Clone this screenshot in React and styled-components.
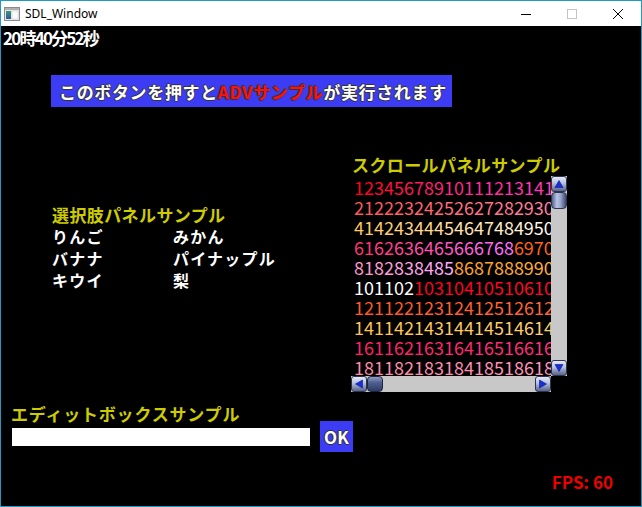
import React from 'react';
import styled, { createGlobalStyle } from 'styled-components';

const Global = createGlobalStyle`
  html, body { margin: 0; padding: 0; background: #fff; }
  body { font-family: "Noto Sans CJK JP", "Noto Sans", sans-serif; }
`;

const Window = styled.div`
  width: 642px;
  height: 507px;
  box-sizing: border-box;
  border: 1px solid #1f9ac4;
  display: flex;
  flex-direction: column;
  background: #fff;
  overflow: hidden;
`;

const TitleBar = styled.div`
  height: 25px;
  flex-shrink: 0;
  display: flex;
  align-items: center;
  background: #fff;
`;

const AppIcon = styled.svg`
  margin-left: 3px;
  flex-shrink: 0;
`;

const Title = styled.span`
  margin-left: 5px;
  font: 12px "Noto Sans", "Open Sans", sans-serif;
  color: #000;
  line-height: 25px;
`;

const Controls = styled.div`
  margin-left: auto;
  display: flex;
  height: 100%;
`;

const CtrlBtn = styled.div`
  width: 46px;
  height: 100%;
  display: flex;
  align-items: center;
  justify-content: center;
`;

const Client = styled.div`
  height: 480px;
  flex-shrink: 0;
  background: #000;
  display: flex;
  flex-direction: column;
  font-family: "Noto Sans CJK JP", sans-serif;
  font-weight: 700;
`;

const Clock = styled.div`
  margin: 3px 0 0 2px;
  font-size: 17px;
  line-height: 17px;
  height: 17px;
  letter-spacing: -1.8px;
  color: #fff;
  white-space: nowrap;
`;

const AdvButton = styled.div`
  margin: 29px 0 0 50px;
  width: 401px;
  height: 32px;
  box-sizing: border-box;
  padding-left: 8px;
  background: #3c3cf5;
  display: flex;
  align-items: center;
  font-size: 17px;
  letter-spacing: 0.65px;
  color: #fff;
  white-space: nowrap;
  text-shadow: 1px 0 #333, -1px 0 #333, 0 1px #333, 0 -1px #333;
`;

const Red = styled.span`
  color: #ff1010;
`;

const Middle = styled.div`
  display: grid;
  grid-template-columns: 350px 1fr;
  align-items: start;
`;

const SelectPanel = styled.div`
  margin-top: 99px;
  padding-left: 51px;
`;

const PanelTitle = styled.div`
  font-size: 17px;
  line-height: 17px;
  height: 17px;
  color: #cccc00;
  letter-spacing: 0.4px;
  white-space: nowrap;
`;

const ItemGrid = styled.div`
  margin-top: 5px;
  display: grid;
  grid-template-columns: 121px 121px;
  grid-auto-rows: 22px;
`;

const Item = styled.div`
  font-size: 16px;
  line-height: 16px;
  letter-spacing: 1.2px;
  color: #fff;
  white-space: nowrap;
`;

const ScrollPanel = styled.div`
  margin-top: 49px;
  display: flex;
  flex-direction: column;
`;

const ScrollTitle = styled(PanelTitle)`
  margin-left: 1px;
  margin-bottom: 3px;
`;

const ScrollGrid = styled.div`
  display: grid;
  grid-template-columns: 200px 16px;
  grid-template-rows: 200px 16px;
`;

const NumberArea = styled.div`
  overflow: hidden;
  padding: 1px 0 0 3px;
  box-sizing: border-box;
  font-family: "Noto Sans CJK JP", sans-serif;
  font-weight: 400;
  font-size: 18px;
`;

const NumRow = styled.div`
  height: 20px;
  line-height: 20px;
  white-space: nowrap;
`;

const VBar = styled.div`
  background: #c8c8c8;
  display: flex;
  flex-direction: column;
`;

const HBar = styled.div`
  background: #c8c8c8;
  display: flex;
`;

const Corner = styled.div`
  background: #000;
`;

const Spacer = styled.div`
  flex: 1;
`;

const ArrowBtn = styled.div`
  width: 16px;
  height: 16px;
  box-sizing: border-box;
  border-radius: 3px;
  border: 1px solid #2c3450;
  background: linear-gradient(to bottom, #e4eaf6 0%, #b4c0dc 45%, #7884a8 80%, #59648a 100%);
  display: flex;
  align-items: center;
  justify-content: center;
  flex-shrink: 0;
`;

const VThumb = styled.div`
  width: 16px;
  height: 17px;
  box-sizing: border-box;
  border-radius: 4px;
  border: 1px solid #2c3450;
  background: linear-gradient(to right, #56628c 0%, #b8c4e4 35%, #9aa8cc 60%, #3c4870 100%);
  flex-shrink: 0;
`;

const HThumb = styled.div`
  width: 16px;
  height: 16px;
  box-sizing: border-box;
  border-radius: 4px;
  border: 1px solid #1c2440;
  background: linear-gradient(to bottom, #8e9cc4 0%, #50608e 40%, #2c3a66 100%);
  flex-shrink: 0;
`;

const EditSection = styled.div`
  margin: 15px 0 0 10px;
  display: flex;
  flex-direction: column;
`;

const EditLabel = styled(PanelTitle)`
  line-height: 14px;
  height: 14px;
  letter-spacing: 0.8px;
`;

const EditRow = styled.div`
  display: flex;
  align-items: center;
  gap: 10px;
`;

const EditBox = styled.div`
  width: 298px;
  height: 18px;
  background: #fff;
  margin-left: 1px;
`;

const OkButton = styled.div`
  width: 33px;
  height: 31px;
  background: #3c3cf5;
  color: #fff;
  font-size: 17px;
  display: flex;
  align-items: center;
  justify-content: center;
  text-shadow: 1px 0 #333, -1px 0 #333, 0 1px #333, 0 -1px #333;
`;

const FpsRow = styled.div`
  margin-top: 21px;
  display: flex;
  justify-content: flex-end;
  padding-right: 28px;
`;

const Fps = styled.div`
  font-size: 17px;
  line-height: 17px;
  color: #ee0000;
  white-space: pre;
`;

const segs = [
  [1, 20, [255, 0, 24], [255, 80, 255]],
  [21, 40, [255, 88, 88], [255, 170, 240]],
  [41, 50, [255, 200, 96], [255, 246, 236]],
  [51, 60, [255, 250, 240], [255, 255, 255]],
  [61, 68, [255, 52, 116], [255, 110, 255]],
  [69, 80, [255, 96, 24], [255, 130, 80]],
  [81, 85, [255, 150, 200], [255, 170, 250]],
  [86, 100, [255, 160, 40], [255, 210, 90]],
  [101, 102, [255, 255, 255], [255, 250, 245]],
  [103, 120, [255, 0, 32], [255, 40, 80]],
  [121, 140, [255, 88, 36], [255, 130, 100]],
  [141, 160, [255, 196, 84], [255, 230, 160]],
  [161, 180, [255, 32, 100], [255, 80, 190]],
  [181, 200, [255, 136, 168], [255, 170, 230]],
];

function colorOf(n) {
  const s = segs.find(([a, b]) => n >= a && n <= b);
  const [a, b, c1, c2] = s;
  const t = b === a ? 0 : (n - a) / (b - a);
  const c = c1.map((v, i) => Math.round(v + (c2[i] - v) * t));
  return `rgb(${c[0]},${c[1]},${c[2]})`;
}

const Tri = ({ dir }) => {
  const pts = {
    up: '5,1.5 9,8.5 1,8.5',
    down: '1,1.5 9,1.5 5,8.5',
    left: '1.5,5 8.5,1 8.5,9',
    right: '1.5,1 8.5,5 1.5,9',
  }[dir];
  return (
    <svg width="10" height="10" viewBox="0 0 10 10">
      <polygon points={pts} fill="#1a2ed8" stroke="#0c1690" strokeWidth="0.6" />
    </svg>
  );
};

const items = [
  ['りんご', 'みかん'],
  ['バナナ', 'パイナップル'],
  ['キウイ', '梨'],
];

export default function App() {
  const rows = Array.from({ length: 10 }, (_, r) =>
    Array.from({ length: 20 }, (_, i) => r * 20 + i + 1)
  );
  return (
    <>
      <Global />
      <Window>
        <TitleBar>
          <AppIcon width="16" height="14" viewBox="0 0 16 14">
            <defs>
              <linearGradient id="pane" x1="0" y1="0" x2="0" y2="1">
                <stop offset="0" stopColor="#3a9a7a" />
                <stop offset="1" stopColor="#2a5a9a" />
              </linearGradient>
            </defs>
            <rect x="0.5" y="0.5" width="15" height="13" fill="#e8e8e8" stroke="#8a8a8a" />
            <rect x="1" y="1" width="14" height="2" fill="#b0b0b0" />
            <rect x="2" y="4" width="5" height="8" fill="url(#pane)" />
            <rect x="8" y="4" width="6" height="8" fill="#fafafa" stroke="#c8c8c8" strokeWidth="0.5" />
          </AppIcon>
          <Title>SDL_Window</Title>
          <Controls>
            <CtrlBtn>
              <svg width="10" height="10" viewBox="0 0 10 10">
                <line x1="0" y1="5.5" x2="10" y2="5.5" stroke="#000" strokeWidth="1" />
              </svg>
            </CtrlBtn>
            <CtrlBtn>
              <svg width="10" height="10" viewBox="0 0 10 10">
                <rect x="0.5" y="0.5" width="9" height="9" fill="none" stroke="#c4c4c4" strokeWidth="1" />
              </svg>
            </CtrlBtn>
            <CtrlBtn>
              <svg width="10" height="10" viewBox="0 0 10 10">
                <line x1="0" y1="0" x2="10" y2="10" stroke="#000" strokeWidth="1" />
                <line x1="10" y1="0" x2="0" y2="10" stroke="#000" strokeWidth="1" />
              </svg>
            </CtrlBtn>
          </Controls>
        </TitleBar>
        <Client>
          <Clock>20時40分52秒</Clock>
          <AdvButton>
            このボタンを押すと<Red>ADVサンプル</Red>が実行されます
          </AdvButton>
          <Middle>
            <SelectPanel>
              <PanelTitle>選択肢パネルサンプル</PanelTitle>
              <ItemGrid>
                {items.flat().map((t, i) => (
                  <Item key={i}>{t}</Item>
                ))}
              </ItemGrid>
            </SelectPanel>
            <ScrollPanel>
              <ScrollTitle>スクロールパネルサンプル</ScrollTitle>
              <ScrollGrid>
                <NumberArea>
                  {rows.map((row, r) => (
                    <NumRow key={r}>
                      {row.map((n) => (
                        <span key={n} style={{ color: colorOf(n) }}>
                          {n}
                        </span>
                      ))}
                    </NumRow>
                  ))}
                </NumberArea>
                <VBar>
                  <ArrowBtn>
                    <Tri dir="up" />
                  </ArrowBtn>
                  <VThumb />
                  <Spacer />
                  <ArrowBtn>
                    <Tri dir="down" />
                  </ArrowBtn>
                </VBar>
                <HBar>
                  <ArrowBtn>
                    <Tri dir="left" />
                  </ArrowBtn>
                  <HThumb />
                  <Spacer />
                  <ArrowBtn>
                    <Tri dir="right" />
                  </ArrowBtn>
                </HBar>
                <Corner />
              </ScrollGrid>
            </ScrollPanel>
          </Middle>
          <EditSection>
            <EditLabel>エディットボックスサンプル</EditLabel>
            <EditRow>
              <EditBox />
              <OkButton>OK</OkButton>
            </EditRow>
          </EditSection>
          <FpsRow>
            <Fps>FPS: 60</Fps>
          </FpsRow>
        </Client>
      </Window>
    </>
  );
}
